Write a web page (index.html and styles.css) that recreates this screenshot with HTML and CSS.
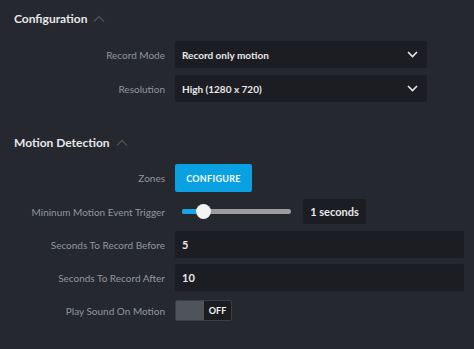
FILE: index.html
```html
<!DOCTYPE html>
<html lang="en">
<head>
    <meta charset="UTF-8">
    <title>Camera Settings</title>
    <link rel="stylesheet" href="styles.css">
</head>
<body>
    <div class="panel">
        <section class="group">
            <h3 class="group-title">Configuration
                <svg class="caret" width="12" height="7" viewBox="0 0 12 7"><path d="M1 6.5L6 1.5L11 6.5" fill="none" stroke="#4d5259" stroke-width="1.3"/></svg>
            </h3>
            <div class="row">
                <span class="label">Record Mode</span>
                <div class="select">Record only motion
                    <svg width="11" height="7" viewBox="0 0 11 7"><path d="M1 1L5.5 5.5L10 1" fill="none" stroke="#e8e8e8" stroke-width="1.6"/></svg>
                </div>
            </div>
            <div class="row">
                <span class="label">Resolution</span>
                <div class="select">High (1280 x 720)
                    <svg width="11" height="7" viewBox="0 0 11 7"><path d="M1 1L5.5 5.5L10 1" fill="none" stroke="#e8e8e8" stroke-width="1.6"/></svg>
                </div>
            </div>
        </section>

        <section class="group motion">
            <h3 class="group-title">Motion Detection
                <svg class="caret" width="12" height="7" viewBox="0 0 12 7"><path d="M1 6.5L6 1.5L11 6.5" fill="none" stroke="#4d5259" stroke-width="1.3"/></svg>
            </h3>
            <div class="row">
                <span class="label">Zones</span>
                <div><button class="btn">CONFIGURE</button></div>
            </div>
            <div class="row">
                <span class="label">Mininum Motion Event Trigger</span>
                <div class="slider-wrap">
                    <div class="slider">
                        <div class="fill" style="width: 21px"></div>
                        <div class="thumb" style="left: 21px"></div>
                    </div>
                    <div class="value">1 seconds</div>
                </div>
            </div>
            <div class="row">
                <span class="label">Seconds To Record Before</span>
                <div class="input">5</div>
            </div>
            <div class="row">
                <span class="label">Seconds To Record After</span>
                <div class="input">10</div>
            </div>
            <div class="row">
                <span class="label">Play Sound On Motion</span>
                <div><div class="toggle"><span class="knob"></span><span class="state">OFF</span></div></div>
            </div>
        </section>
    </div>
</body>
</html>
```

FILE: styles.css
```css
* {
    margin: 0;
    padding: 0;
    box-sizing: border-box;
}
body {
    background: #25282f;
    font-family: Lato, "Open Sans", sans-serif;
    color: #e8e8e8;
    width: 474px;
    height: 349px;
    overflow: hidden;
}
.panel {
    padding: 11px 10px 0 14px;
}
.group-title {
    font-size: 12px;
    font-weight: 700;
    line-height: 16px;
    color: #e6e7e8;
    display: flex;
    align-items: center;
    gap: 6px;
    margin-bottom: 14px;
}
.caret {
    margin-top: -2px;
}
.motion {
    margin-top: 33px;
}
.motion .group-title {
    margin-bottom: 13px;
}
.row {
    display: grid;
    grid-template-columns: 151px 1fr;
    column-gap: 10px;
    align-items: center;
    min-height: 27px;
    margin-bottom: 7px;
}
.motion .row {
    margin-bottom: 6px;
}
.label {
    text-align: right;
    font-size: 10px;
    color: #92969d;
}
.select {
    width: 252px;
    height: 27px;
    background: #1b1d22;
    border-radius: 2px;
    display: flex;
    align-items: center;
    justify-content: space-between;
    padding: 0 9px 0 7px;
    font-size: 10px;
    font-weight: 700;
}
.btn {
    height: 28px;
    width: 77px;
    background: #0aa1e2;
    color: #f4fbff;
    border: none;
    border-radius: 2px;
    font-family: Lato, sans-serif;
    font-size: 9px;
    font-weight: 700;
    letter-spacing: 0.3px;
}
.slider-wrap {
    display: flex;
    align-items: center;
}
.slider {
    position: relative;
    width: 109px;
    height: 5px;
    margin-left: 7px;
    background: #9c9c9c;
    border-radius: 3px;
}
.slider .fill {
    height: 5px;
    background: #1aa2e6;
    border-radius: 3px 0 0 3px;
}
.slider .thumb {
    position: absolute;
    top: -5px;
    width: 15px;
    height: 15px;
    margin-left: -7px;
    border-radius: 50%;
    background: #f4f4f4;
}
.value {
    margin-left: 12px;
    width: 63px;
    height: 25px;
    background: #1b1d22;
    border-radius: 2px;
    display: flex;
    align-items: center;
    justify-content: center;
    font-size: 11px;
    font-weight: 700;
}
.input {
    width: 289px;
    height: 27px;
    background: #1b1d22;
    border-radius: 2px;
    display: flex;
    align-items: center;
    padding-left: 7px;
    font-size: 11px;
    font-weight: 700;
}
.toggle {
    display: flex;
    width: 57px;
    height: 21px;
    border: 1px solid #3a3e45;
    border-radius: 2px;
    overflow: hidden;
}
.toggle .knob {
    width: 28px;
    background: #4f535a;
}
.toggle .state {
    flex: 1;
    background: #1a1c20;
    display: flex;
    align-items: center;
    justify-content: center;
    font-size: 9px;
    font-weight: 700;
    color: #f2f2f2;
}
```
